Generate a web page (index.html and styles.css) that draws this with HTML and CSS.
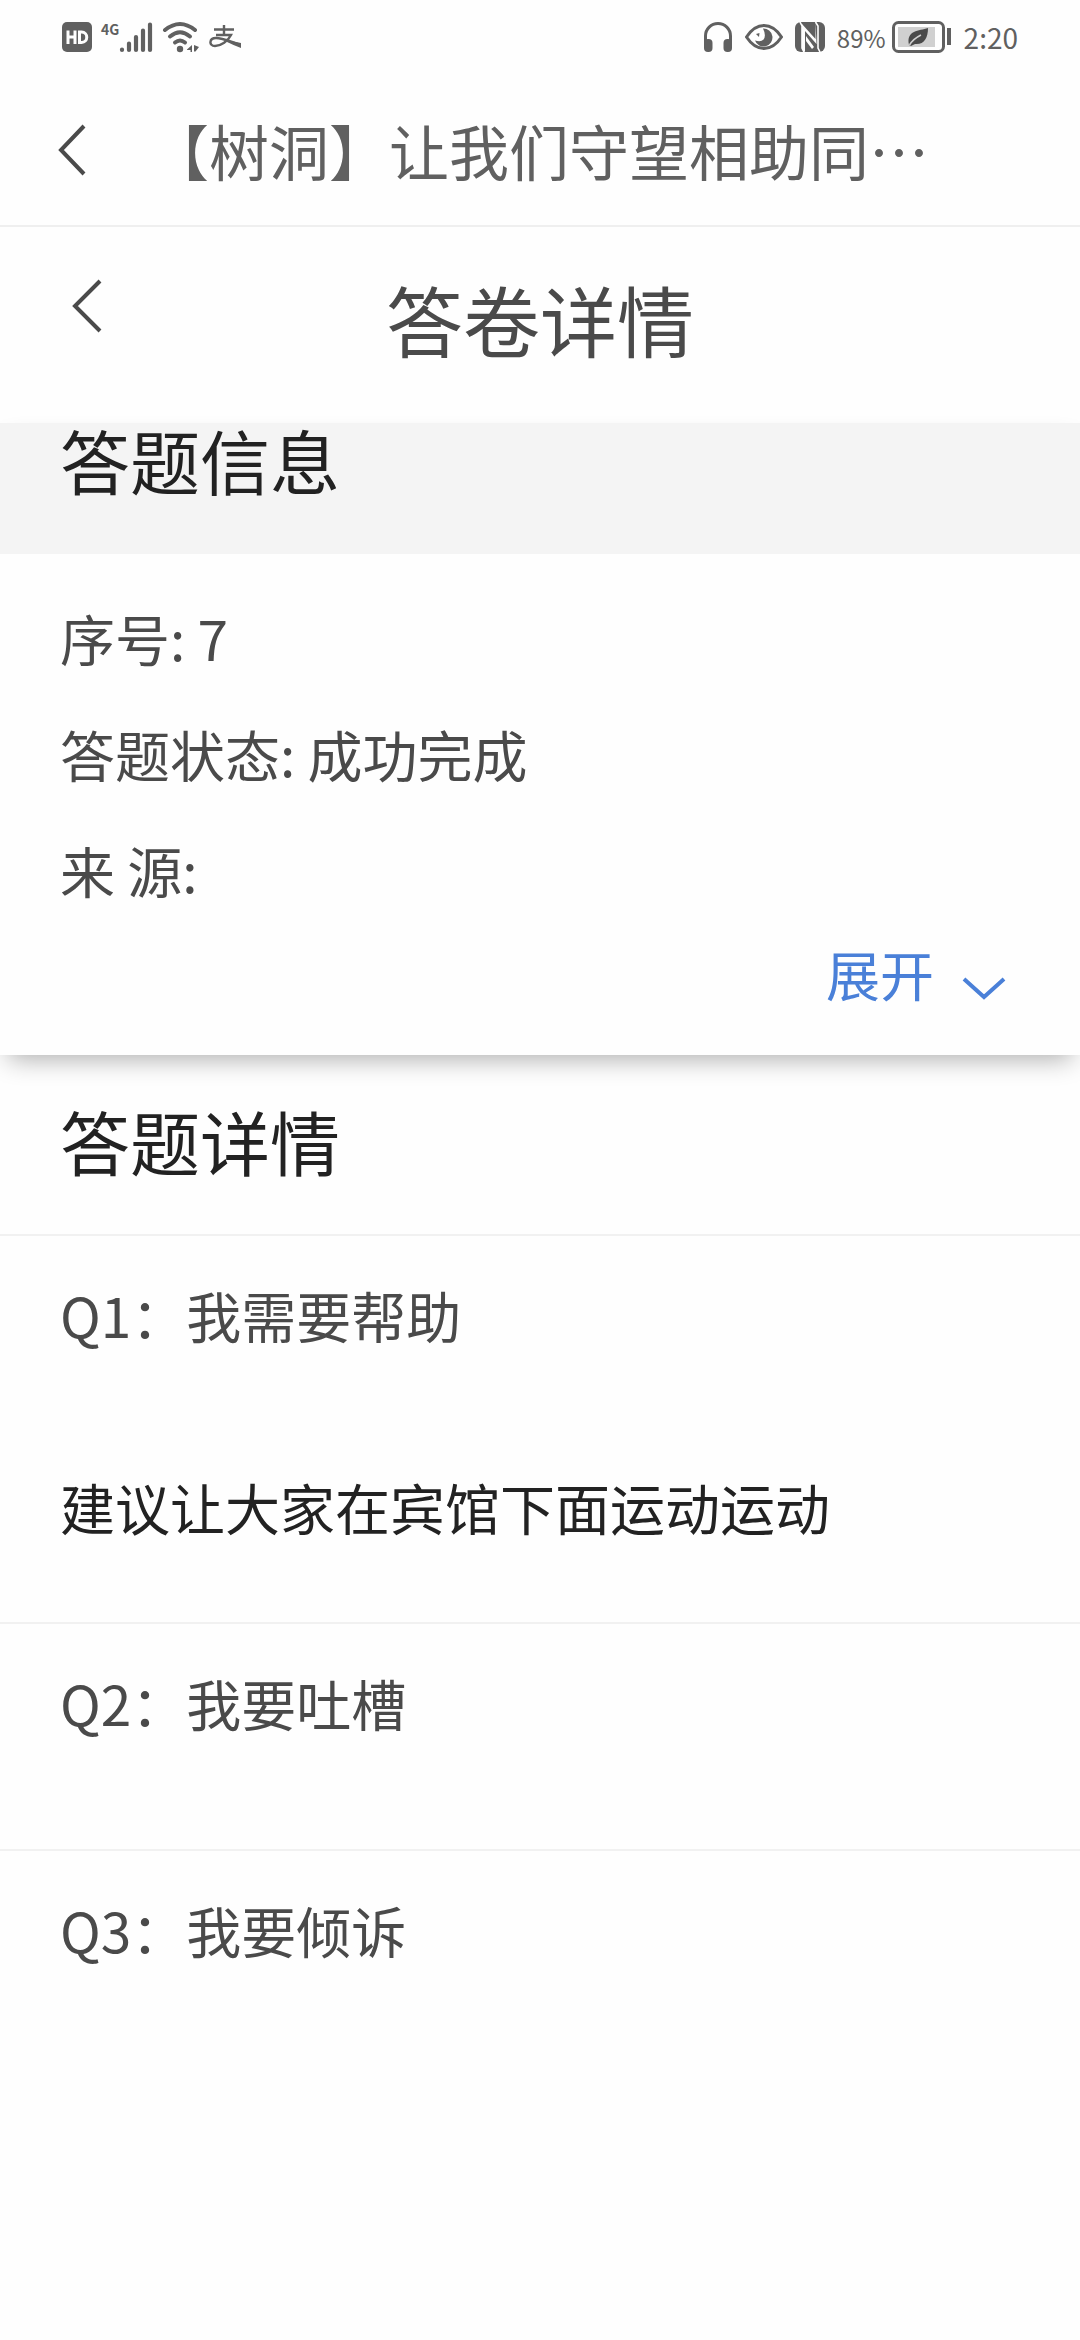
FILE: index.html
```html
<!DOCTYPE html>
<html lang="zh-CN">
<head>
<meta charset="utf-8">
<meta name="viewport" content="width=device-width, initial-scale=1">
<title>答卷详情</title>
<link rel="stylesheet" href="styles.css">
</head>
<body>
<div class="status-bar">
  <div class="status-left">
    <svg class="hd-icon" width="30" height="30" viewBox="0 0 30 30" aria-label="HD">
      <rect width="30" height="30" rx="5" fill="currentColor"/>
      <g fill="none" stroke="#fefefe" stroke-width="3"><path d="M6 8.500V22M13 8.500V22M6 15H13"/><path d="M17.500 10H19.500C26.500 10 26.500 20.500 19.500 20.500H17.500Z"/></g>
    </svg>
    <span class="network">
      <span class="network-type">4G</span>
      <svg width="34" height="32" viewBox="0 0 34 32" aria-hidden="true">
        <g stroke="currentColor" stroke-width="4.200" stroke-linecap="round"><path d="M3 28.500V29M10 22.500V29M17 16V29M24 9.500V29M31 3.500V29"/></g>
      </svg>
    </span>
    <svg class="wifi-icon" width="38" height="32" viewBox="0 0 38 32" aria-hidden="true">
      <g fill="none" stroke="currentColor" stroke-width="4" stroke-linecap="round"><path d="M3 9Q18 -3 33 9"/><path d="M8 15.500Q18 7 28 15.500"/><path d="M13 21.500Q18 17.500 23 21.500"/></g>
      <circle cx="18" cy="28" r="3.200" fill="currentColor"/>
      <path d="M25 28.500L30 24V31H28.500V29H25ZM32 24L37 26L33.500 30.500H32Z" fill="currentColor"/>
    </svg>
    <svg width="32" height="26" viewBox="0 0 32 26" aria-hidden="true">
      <g fill="none" stroke="currentColor" stroke-width="2.400"><path d="M5 5.500H25M15 1V10.500M7 11H22C19 17 12 22 6 22C-0.500 22 0 14 7 14C14 14 22 18 32 21"/></g>
      <path d="M17 16L32 19V24Q24 21 17 17.500Z" fill="currentColor"/>
    </svg>
  </div>
  <div class="status-right">
    <svg width="30" height="30" viewBox="0 0 30 30" aria-hidden="true">
      <path d="M2.500 23V14a12.500 12.500 0 0 1 25 0V23" fill="none" stroke="currentColor" stroke-width="3"/>
      <rect x="1" y="17" width="8.500" height="13" rx="4" fill="currentColor"/><rect x="20.500" y="17" width="8.500" height="13" rx="4" fill="currentColor"/>
    </svg>
    <svg width="38" height="26" viewBox="0 0 38 26" aria-hidden="true">
      <path d="M1.500 13Q9 1.500 19 1.500T36.500 13Q29 24.500 19 24.500T1.500 13Z" fill="none" stroke="currentColor" stroke-width="3"/>
      <path d="M18 4.500a9 9 0 1 1-8 12q6 2 8.500-1q3-4-0.500-11Z" fill="currentColor"/>
      <path d="M11 10L14.500 9L14 13Z" fill="currentColor"/>
    </svg>
    <svg width="30" height="30" viewBox="0 0 30 30" aria-hidden="true">
      <rect width="30" height="30" rx="6" fill="currentColor"/>
      <path d="M5 0L7 4V26L9 30M20.500 0L23 4V26L25 30" fill="none" stroke="#fefefe" stroke-width="1.600"/>
      <path d="M7 2L20.500 17V0L21.500 22L10 9V30L7 27Z" fill="#fefefe"/>
      <path d="M11 14L19 25L17 27L11 19Z" fill="#fefefe"/>
    </svg>
    <span class="battery-level">89%</span>
    <svg class="battery-icon" width="60" height="32" viewBox="0 0 60 32" aria-hidden="true">
      <rect x="1.500" y="1.500" width="50" height="29" rx="5" fill="none" stroke="currentColor" stroke-width="3"/>
      <rect x="6" y="6" width="37" height="20" fill="#d0d0d0"/>
      <path d="M57 7V24" stroke="currentColor" stroke-width="4"/>
      <path d="M36 7C36 17 32 24 23 23L19 25L17 24C14 9 27 10 36 7Z" fill="#4a4a4a"/>
      <path d="M17.500 24Q21 18 29 14" fill="none" stroke="#d0d0d0" stroke-width="1.500"/>
    </svg>
    <time>2:20</time>
  </div>
</div>

<header class="app-bar">
  <button class="icon-button" type="button" aria-label="返回">
    <svg width="30" height="52" viewBox="0 0 30 52"><path d="M27 2L4 26L27 50" fill="none" stroke="currentColor" stroke-width="4"/></svg>
  </button>
  <div class="app-title">【树洞】让我们守望相助同…</div>
</header>

<main>
  <div class="page-header">
    <button class="icon-button" type="button" aria-label="返回上一页">
      <svg width="30" height="54" viewBox="0 0 30 54"><path d="M28 2L3 27L28 52" fill="none" stroke="currentColor" stroke-width="4"/></svg>
    </button>
    <h1>答卷详情</h1>
  </div>

  <section class="info-card">
    <h2 class="info-heading">答题信息</h2>
    <div class="info-body">
      <p>序号: 7</p>
      <p>答题状态: 成功完成</p>
      <p>来 源:</p>
      <button class="expand" type="button">展开
        <svg width="44" height="54" viewBox="0 0 44 54" aria-hidden="true"><path d="M2 32L22 50L42 32" fill="none" stroke="currentColor" stroke-width="4"/></svg>
      </button>
    </div>
  </section>

  <section class="details">
    <h2 class="details-heading">答题详情</h2>
    <article class="question">
      <h3>Q1：我需要帮助</h3>
      <p>建议让大家在宾馆下面运动运动</p>
    </article>
    <article class="question">
      <h3>Q2：我要吐槽</h3>
    </article>
    <article class="question">
      <h3>Q3：我要倾诉</h3>
    </article>
  </section>
</main>
</body>
</html>
```
FILE: styles.css
```css
* {
  box-sizing: border-box;
}

body {
  margin: 0;
  background: #fefefe;
  color: #4a4a4a;
  font-family: "Noto Sans CJK SC", sans-serif;
  font-size: 55px;
}

h1, h2, h3, p {
  margin: 0;
  font-weight: 400;
}

svg {
  display: block;
  flex: none;
}

button {
  margin: 0;
  padding: 0;
  border: 0;
  background: none;
  color: inherit;
  font: inherit;
}

.status-bar {
  display: flex;
  justify-content: space-between;
  align-items: center;
  height: 74px;
  padding: 0 62px;
  color: #606060;
  font-size: 28px;
}

.status-left,
.status-right {
  display: flex;
  align-items: center;
}

.status-left {
  gap: 9px;
}

.status-right {
  gap: 12px;
}

.network {
  display: flex;
  align-items: flex-start;
}

.network-type {
  font-size: 14px;
  font-weight: 700;
  line-height: 16px;
}

.battery-level {
  margin-right: -6px;
  font-size: 24px;
}

.app-bar {
  display: grid;
  grid-template-columns: 92px 1fr;
  align-items: center;
  height: 153px;
  padding: 0 57px;
  border-bottom: 2px solid #efefef;
}

.app-title {
  color: #606060;
  font-size: 60px;
  line-height: 80px;
  white-space: nowrap;
}

.page-header {
  display: grid;
  grid-template-columns: 1fr auto 1fr;
  align-items: start;
  padding: 52px 72px 64px;
}

.page-header h1 {
  font-size: 77px;
  line-height: 80px;
}

.info-card {
  position: relative;
  background: #fefefe;
  box-shadow: 0 12px 24px -8px rgba(0, 0, 0, 0.32);
}

.info-heading,
.details-heading {
  color: #222;
  font-size: 70px;
  line-height: 74px;
}

.info-heading {
  padding: 0 60px 57px;
  background: #f4f4f4;
}

.info-body {
  display: flex;
  flex-direction: column;
  padding: 25px 60px 34px;
  line-height: 116px;
}

.expand {
  display: flex;
  align-items: center;
  align-self: flex-end;
  gap: 28px;
  margin-right: 14px;
  color: #4a80d8;
  font-size: 54px;
  line-height: 94px;
}

.details-heading {
  padding: 49px 60px 56px;
  border-bottom: 2px solid #f1f1f1;
}

.question {
  padding: 38px 60px 0;
}

.question + .question {
  border-top: 2px solid #f1f1f1;
}

.question h3 {
  padding-bottom: 107px;
  font-size: 55px;
  line-height: 80px;
}

.question p {
  padding-bottom: 71px;
  color: #222;
  line-height: 90px;
}
```
